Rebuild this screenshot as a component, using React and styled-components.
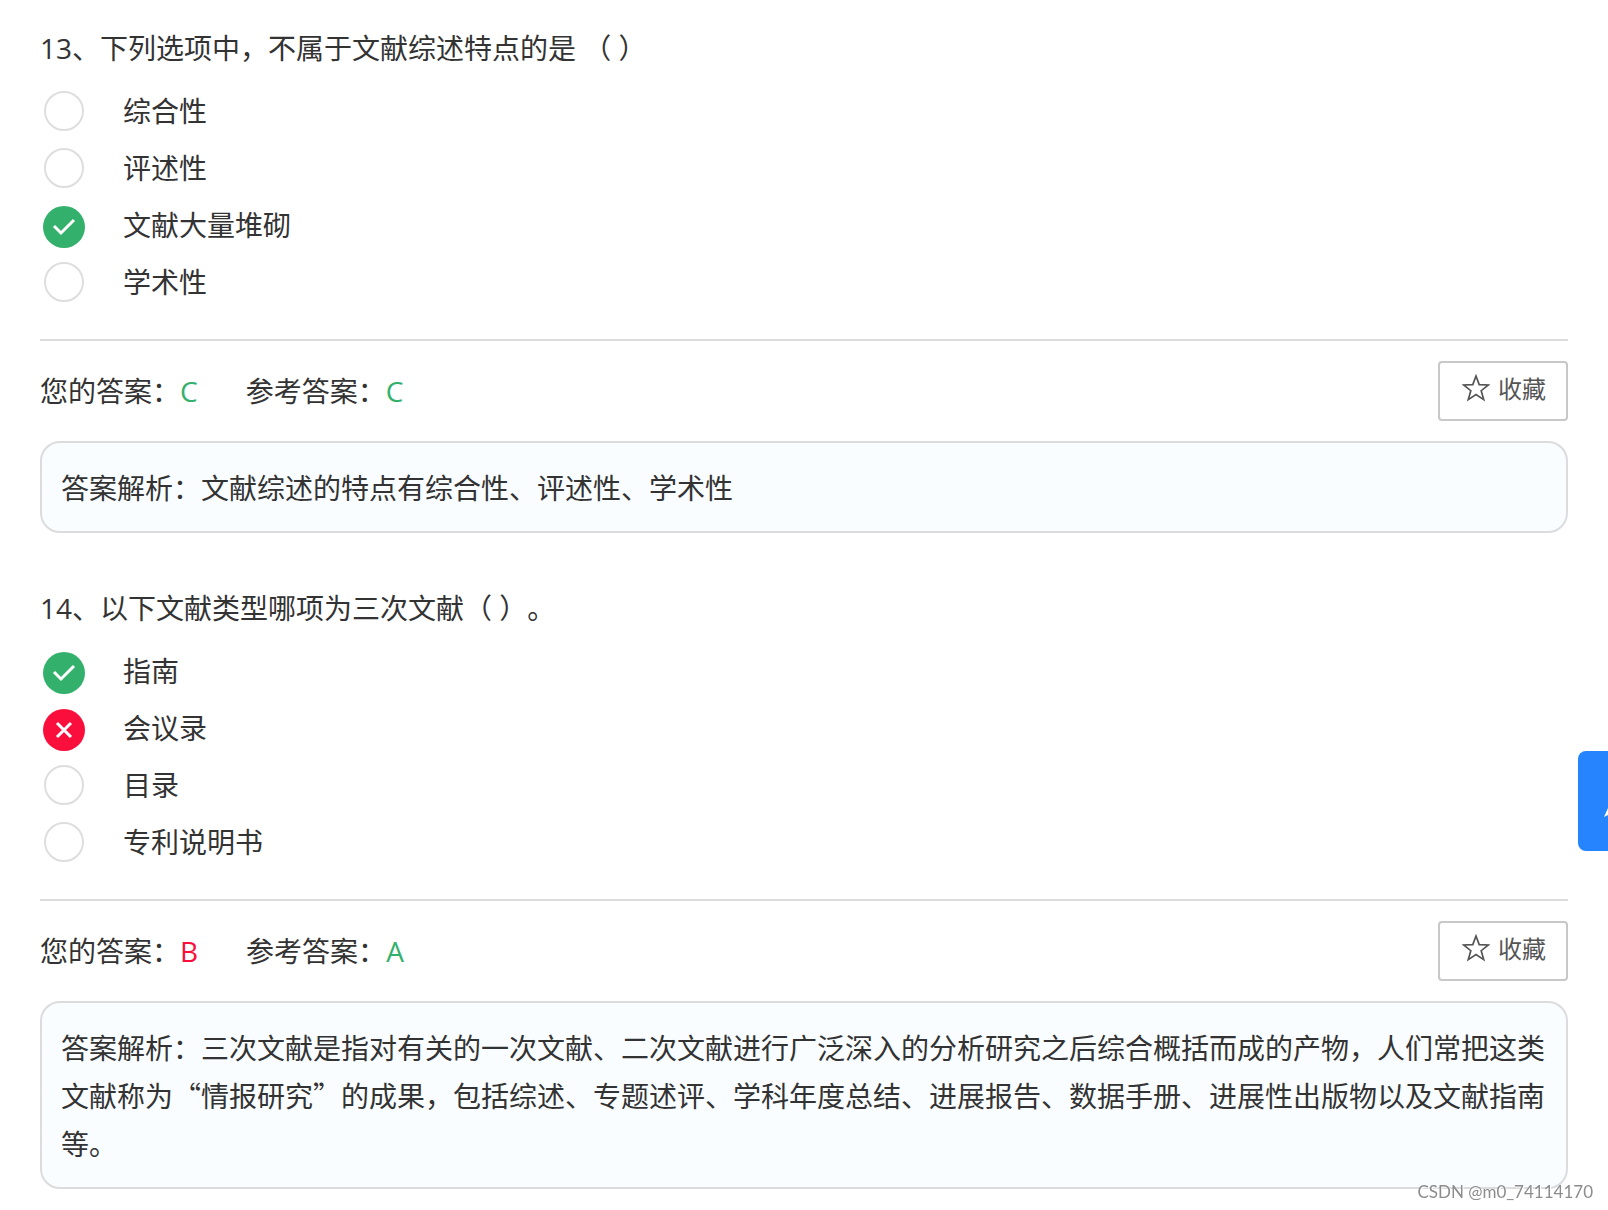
import React from "react";
import styled, { createGlobalStyle } from "styled-components";

const questions = [
  {
    id: "q13",
    title: "13、下列选项中，不属于文献综述特点的是 （ ）",
    options: [
      { label: "综合性" },
      { label: "评述性" },
      { label: "文献大量堆砌", state: "right" },
      { label: "学术性" },
    ],
    yours: "C",
    reference: "C",
    analysis: "文献综述的特点有综合性、评述性、学术性",
  },
  {
    id: "q14",
    title: "14、以下文献类型哪项为三次文献（ ）。",
    options: [
      { label: "指南", state: "right" },
      { label: "会议录", state: "wrong" },
      { label: "目录" },
      { label: "专利说明书" },
    ],
    yours: "B",
    reference: "A",
    analysis:
      "三次文献是指对有关的一次文献、二次文献进行广泛深入的分析研究之后综合概括而成的产物，人们常把这类文献称为“情报研究”的成果，包括综述、专题述评、学科年度总结、进展报告、数据手册、进展性出版物以及文献指南等。",
  },
];

const marks = {
  right: "M11 20 L18 27 L31 14",
  wrong: "M14 14 L28 28 M28 14 L14 28",
};

const Question = ({ data }) => {
  return (
    <QuestionContainer>
      <Title>{data.title}</Title>
      <OptionList>
        {data.options.map((option, idx) => (
          <Option key={option.label}>
            <RadioBox>
              <Radio
                type="radio"
                name={data.id}
                $state={option.state}
                defaultChecked={idx === "ABCD".indexOf(data.yours)}
              />
              {option.state && (
                <Mark viewBox="0 0 42 42">
                  <path d={marks[option.state]} />
                </Mark>
              )}
            </RadioBox>
            <OptionText>{option.label}</OptionText>
          </Option>
        ))}
      </OptionList>
      <AnswerBar>
        <Answer>
          您的答案：
          <Letter $wrong={data.yours !== data.reference}>{data.yours}</Letter>
        </Answer>
        <Answer>
          参考答案：<Letter>{data.reference}</Letter>
        </Answer>
        <CollectButton type="button">
          <Star viewBox="0 0 28 28">
            <path d="M14 2 L17.2 10.6 L26.4 11 L19.2 16.7 L21.7 25.6 L14 20.5 L6.3 25.6 L8.8 16.7 L1.6 11 L10.8 10.6 Z" />
          </Star>
          收藏
        </CollectButton>
      </AnswerBar>
      <Analysis>{`答案解析：${data.analysis}`}</Analysis>
    </QuestionContainer>
  );
};

const App = () => {
  return (
    <Page lang="zh-CN">
      <GlobalStyle />
      {questions.map((data) => (
        <Question data={data} key={data.id} />
      ))}
      <SideButton type="button" aria-label="发送">
        <svg viewBox="0 0 48 48" width="48" height="48">
          <path d="M0 40 L16 4 L32 40 L16 32 Z" fill="#fff" />
        </svg>
      </SideButton>
      <Watermark>CSDN @m0_74114170</Watermark>
    </Page>
  );
};

export default App;

const GlobalStyle = createGlobalStyle`
  body {
    margin: 0;
    background-color: #fff;
  }

  * {
    box-sizing: border-box;
  }
`;

const Page = styled.main`
  padding: 24px 40px 20px;
  color: #333;
  font-family: "Noto Sans CJK SC", sans-serif;
  font-size: 28px;
  line-height: 48px;
  text-spacing-trim: space-all;
`;

const QuestionContainer = styled.section`
  & + & {
    margin-top: 51px;
  }
`;

const Title = styled.h2`
  margin: 0;
  font-family: "Open Sans", "Noto Sans CJK SC", sans-serif;
  font-size: 28px;
  font-weight: 400;
`;

const OptionList = styled.div`
  padding: 10px 0 29px;
  border-bottom: 2px solid #dcdcdc;
`;

const Option = styled.label`
  display: flex;
  align-items: center;
  height: 57px;
`;

const OptionText = styled.span`
  padding-bottom: 2px;
`;

const RadioBox = styled.span`
  position: relative;
  display: flex;
  justify-content: center;
  width: 48px;
  margin-right: 35px;
`;

const stateColors = {
  right: "#33b16c",
  wrong: "#f90e3c",
};

const Radio = styled.input`
  appearance: none;
  width: ${({ $state }) => ($state ? 42 : 40)}px;
  height: ${({ $state }) => ($state ? 42 : 40)}px;
  margin: ${({ $state }) => ($state ? "4px 0 0" : "0")};
  border: ${({ $state }) => ($state ? "none" : "2px solid #dedede")};
  border-radius: 50%;
  background-color: ${({ $state }) => stateColors[$state] || "#fff"};
`;

const Mark = styled.svg`
  position: absolute;
  bottom: 0;
  width: 42px;
  height: 42px;
  fill: none;
  stroke: #fff;
  stroke-width: 3px;
  pointer-events: none;
`;

const AnswerBar = styled.div`
  display: flex;
  align-items: center;
  gap: 48px;
  height: 60px;
  margin: 20px 0;
`;

const Answer = styled.span`
  padding-bottom: 2px;
  white-space: nowrap;
`;

const Letter = styled.span`
  color: ${({ $wrong }) => ($wrong ? "#f90e3c" : "#33b16c")};
  font-family: "Open Sans", sans-serif;
`;

const CollectButton = styled.button`
  display: flex;
  align-items: center;
  gap: 8px;
  height: 60px;
  margin-left: auto;
  padding: 0 20px 6px 22px;
  border: 2px solid #c8c8c8;
  border-radius: 4px;
  background-color: #fff;
  color: #555;
  font-family: inherit;
  font-size: 24px;
  line-height: 36px;
`;

const Star = styled.svg`
  width: 28px;
  height: 28px;
  fill: none;
  stroke: #555;
  stroke-width: 1.7;
`;

const Analysis = styled.div`
  padding: 20px 19px;
  border: 2px solid #dcdcdc;
  border-radius: 20px;
  background-color: #f9fdff;
`;

const SideButton = styled.button`
  position: fixed;
  top: 751px;
  right: -70px;
  display: flex;
  align-items: center;
  justify-content: center;
  width: 100px;
  height: 100px;
  padding: 0;
  border: none;
  border-radius: 8px;
  background-color: #2684ff;
`;

const Watermark = styled.div`
  position: fixed;
  right: 15px;
  bottom: 8px;
  color: #8c8c8c;
  font-family: Lato, sans-serif;
  font-size: 17px;
  line-height: 20px;
  text-shadow: 1px 1px 0 #fff;
`;
